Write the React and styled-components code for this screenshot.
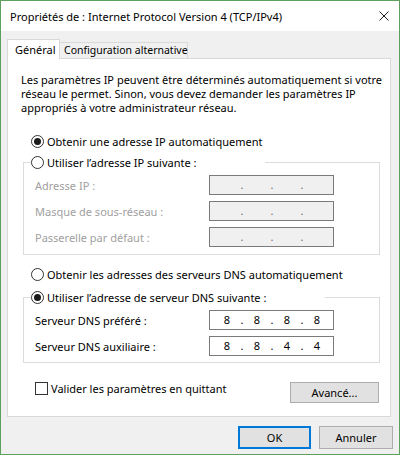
import React from 'react';
import styled, { createGlobalStyle } from 'styled-components';

const Global = createGlobalStyle`
  html, body { margin: 0; padding: 0; background: #ffffff; }
  body {
    font-family: "Noto Sans", "Open Sans", sans-serif;
    font-size: 11px;
    color: #000;
  }
  * { box-sizing: border-box; }
`;

const Window = styled.div`
  width: 400px;
  height: 455px;
  border: 1px solid #5e9f5e;
  background: #f0f0f0;
  display: flex;
  flex-direction: column;
`;

const TitleBar = styled.div`
  height: 30px;
  flex: none;
  background: #ffffff;
  display: flex;
  align-items: center;
  justify-content: space-between;
  padding: 0 10px 0 9px;
  font-size: 11px;
`;

const Close = styled.svg`
  width: 10px;
  height: 10px;
  display: block;
`;

const Body = styled.div`
  flex: 1;
  display: flex;
  flex-direction: column;
  padding: 8px 8px 0 6px;
`;

const Tabs = styled.div`
  display: flex;
  align-items: flex-end;
  height: 20px;
  margin-bottom: -1px;
  position: relative;
  z-index: 1;
`;

const Tab = styled.div`
  border: 1px solid #d9d9d9;
  white-space: nowrap;
  line-height: 15px;
  ${p => p.$active ? `
    width: 53px;
    height: 20px;
    background: #ffffff;
    border-bottom: none;
    padding: 2px 0 0 7px;
    position: relative;
    z-index: 2;
  ` : `
    width: 129px;
    height: 17px;
    margin-left: -1px;
    background: #f0f0f0;
    padding: 0 0 0 4px;
    font-size: 10.5px;
  `}
`;

const Panel = styled.div`
  background: #ffffff;
  border: 1px solid #d9d9d9;
  width: 384px;
  padding: 14px 10px 13px 13px;
  display: flex;
  flex-direction: column;
`;

const Description = styled.p`
  margin: 0;
  line-height: 14px;
  white-space: nowrap;
`;

const RadioRow = styled.div`
  display: flex;
  align-items: center;
  gap: 3px;
  height: 16px;
  margin-left: 10px;
  margin-top: ${p => p.$top}px;
  white-space: nowrap;
`;

const Circle = styled.span`
  width: 13px;
  height: 13px;
  flex: none;
  border-radius: 50%;
  border: 1px solid #333333;
  background: #ffffff;
  display: flex;
  align-items: center;
  justify-content: center;
  &::after {
    content: "";
    width: 7px;
    height: 7px;
    border-radius: 50%;
    background: ${p => (p.$checked ? '#1a1a1a' : 'transparent')};
  }
`;

const Group = styled.fieldset`
  margin: ${p => p.$top}px 0 0 2px;
  width: 357px;
  min-width: 0;
  border: 1px solid #dcdcdc;
  padding: 4px 0 ${p => p.$bottom}px 7px;
`;

const Legend = styled.legend`
  padding: 0;
  width: ${p => p.$w}px;
  height: 17px;
  display: flex;
  align-items: center;
  gap: 3px;
  white-space: nowrap;
`;

const Fields = styled.div`
  display: grid;
  grid-template-columns: 174px 125px;
  row-gap: 6px;
  margin-left: 4px;
`;

const FieldLabel = styled.div`
  height: 20px;
  display: flex;
  align-items: center;
  white-space: nowrap;
  color: ${p => (p.$disabled ? '#a0a0a0' : '#000000')};
`;

const IpBox = styled.div`
  width: 125px;
  height: 20px;
  border: 1px solid #7a7a7a;
  background: ${p => (p.$disabled ? '#f0f0f0' : '#ffffff')};
  display: flex;
  align-items: center;
  padding-left: 4px;
`;

const Seg = styled.span`
  width: 26px;
  text-align: center;
  line-height: 18px;
`;

const Dot = styled.span`
  width: 4px;
  text-align: center;
  line-height: 18px;
  color: ${p => (p.$disabled ? '#6d6d6d' : '#000000')};
`;

const Footer = styled.div`
  display: flex;
  align-items: flex-start;
  justify-content: space-between;
  margin-top: 19px;
  margin-right: 1px;
`;

const CheckRow = styled.label`
  display: flex;
  align-items: center;
  gap: 3px;
  height: 13px;
  margin-left: 14px;
  white-space: nowrap;
`;

const Box = styled.span`
  width: 13px;
  height: 13px;
  flex: none;
  border: 1px solid #333333;
  background: #ffffff;
`;

const Button = styled.button`
  font: inherit;
  color: #000;
  width: ${p => p.$w}px;
  height: ${p => p.$h}px;
  background: #e1e1e1;
  border: ${p => (p.$default ? '2px solid #0078d7' : '1px solid #adadad')};
  padding: 0;
  margin: 0;
  display: flex;
  align-items: center;
  justify-content: center;
`;

const ButtonBar = styled.div`
  display: flex;
  justify-content: flex-end;
  gap: 8px;
  margin-top: 9px;
  margin-right: -2px;
`;

function IpField({ values, disabled }) {
  const v = values || ['', '', '', ''];
  return (
    <IpBox $disabled={disabled}>
      <Seg>{v[0]}</Seg>
      <Dot $disabled={disabled}>.</Dot>
      <Seg>{v[1]}</Seg>
      <Dot $disabled={disabled}>.</Dot>
      <Seg>{v[2]}</Seg>
      <Dot $disabled={disabled}>.</Dot>
      <Seg>{v[3]}</Seg>
    </IpBox>
  );
}

export default function App() {
  return (
    <>
      <Global />
      <Window>
        <TitleBar>
          <span>Propriétés de : Internet Protocol Version 4 (TCP/IPv4)</span>
          <Close viewBox="0 0 10 10">
            <path d="M0.5 0.5 L9.5 9.5 M9.5 0.5 L0.5 9.5" stroke="#1a1a1a" strokeWidth="1" fill="none" />
          </Close>
        </TitleBar>
        <Body>
          <Tabs>
            <Tab $active>Général</Tab>
            <Tab>Configuration alternative</Tab>
          </Tabs>
          <Panel>
            <Description>
              Les paramètres IP peuvent être déterminés automatiquement si votre
              <br />
              réseau le permet. Sinon, vous devez demander les paramètres IP
              <br />
              appropriés à votre administrateur réseau.
            </Description>

            <RadioRow $top={18}>
              <Circle $checked />
              Obtenir une adresse IP automatiquement
            </RadioRow>
            <Group $top={5} $bottom={7}>
              <Legend $w={234}>
                <Circle />
                Utiliser l’adresse IP suivante :
              </Legend>
              <Fields>
                <FieldLabel $disabled>Adresse IP :</FieldLabel>
                <IpField disabled />
                <FieldLabel $disabled>Masque de sous-réseau :</FieldLabel>
                <IpField disabled />
                <FieldLabel $disabled>Passerelle par défaut :</FieldLabel>
                <IpField disabled />
              </Fields>
            </Group>

            <RadioRow $top={11}>
              <Circle />
              Obtenir les adresses des serveurs DNS automatiquement
            </RadioRow>
            <Group $top={7} $bottom={6}>
              <Legend $w={294}>
                <Circle $checked />
                Utiliser l’adresse de serveur DNS suivante :
              </Legend>
              <Fields>
                <FieldLabel>Serveur DNS préféré :</FieldLabel>
                <IpField values={['8', '8', '8', '8']} />
                <FieldLabel>Serveur DNS auxiliaire :</FieldLabel>
                <IpField values={['8', '8', '4', '4']} />
              </Fields>
            </Group>

            <Footer>
              <CheckRow>
                <Box />
                Valider les paramètres en quittant
              </CheckRow>
              <Button $w={89} $h={21}>Avancé...</Button>
            </Footer>
          </Panel>
          <ButtonBar>
            <Button $w={73} $h={23} $default>OK</Button>
            <Button $w={74} $h={23}>Annuler</Button>
          </ButtonBar>
        </Body>
      </Window>
    </>
  );
}
